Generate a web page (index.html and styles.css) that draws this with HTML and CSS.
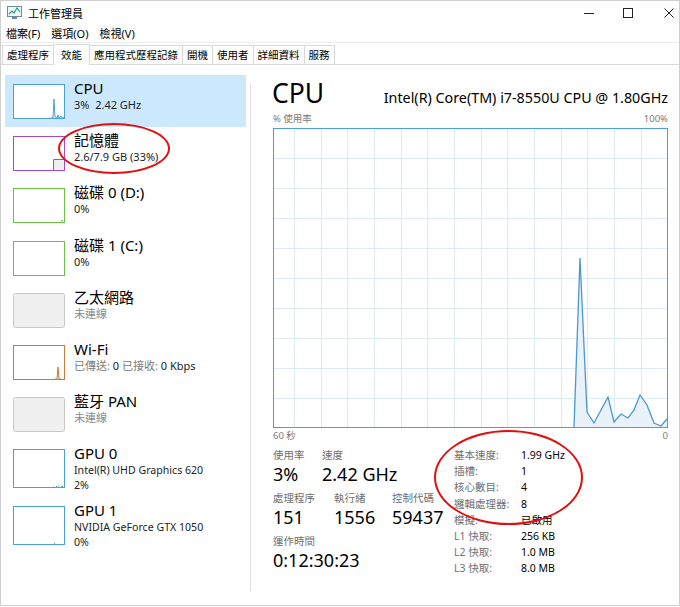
FILE: index.html
```html
<!DOCTYPE html>
<html lang="zh-Hant">
<head>
  <meta charset="UTF-8" />
  <title>工作管理員</title>
  <link rel="stylesheet" href="styles.css">
</head>
<body>
  <div class="window">
    <div class="titlebar">
      <svg class="app-icon" width="15" height="13" viewBox="0 0 15 13">
        <rect x="0.5" y="0.5" width="14" height="10" fill="#eef5fb" stroke="#6f8aa3"/>
        <polyline points="2,8 5,5 7,7 10,2 13,6" fill="none" stroke="#2e9d6a" stroke-width="1.2"/>
        <rect x="5" y="11" width="5" height="2" fill="#6f8aa3"/>
      </svg>
      <span class="title">工作管理員</span>
      <div class="controls">
        <svg class="ctrl" width="10" height="10" viewBox="0 0 10 10"><line x1="0" y1="5.5" x2="10" y2="5.5" stroke="#222" /></svg>
        <svg class="ctrl max" width="10" height="10" viewBox="0 0 10 10"><rect x="0.5" y="0.5" width="9" height="9" fill="none" stroke="#222" /></svg>
        <svg class="ctrl close" width="10" height="10" viewBox="0 0 10 10"><path d="M0.5 0.5 L9.5 9.5 M9.5 0.5 L0.5 9.5" stroke="#222" /></svg>
      </div>
    </div>

    <div class="menubar">
      <span>檔案(F)</span>
      <span>選項(O)</span>
      <span>檢視(V)</span>
    </div>

    <div class="tabs">
      <div class="tab">處理程序</div>
      <div class="tab active">效能</div>
      <div class="tab">應用程式歷程記錄</div>
      <div class="tab">開機</div>
      <div class="tab">使用者</div>
      <div class="tab">詳細資料</div>
      <div class="tab">服務</div>
    </div>

    <div class="main">
      <div class="sidebar">
        <div class="item selected">
          <svg class="thumb" width="52" height="35" viewBox="0 0 52 35">
            <rect x="0.5" y="0.5" width="51" height="34" fill="#fff" stroke="#4a9fd8"/>
            <polyline points="38,34 40,34 41,15 42,33 44,34 45,31 46,34 48,32 49,34 51,33" fill="none" stroke="#4a9fd8"/>
          </svg>
          <div class="info">
            <div class="name">CPU</div>
            <div class="sub">3%&nbsp; 2.42 GHz</div>
          </div>
        </div>
        <div class="item">
          <svg class="thumb" width="52" height="35" viewBox="0 0 52 35">
            <rect x="0.5" y="0.5" width="51" height="34" fill="#fff" stroke="#a64bc8"/>
            <path d="M51 23.5 H40.5 V34" fill="#f2eef5" stroke="#a64bc8"/>
            <rect x="41" y="24" width="10" height="10" fill="#f1eef3"/>
          </svg>
          <div class="info">
            <div class="name">記憶體</div>
            <div class="sub">2.6/7.9 GB (33%)</div>
          </div>
        </div>
        <div class="item">
          <svg class="thumb" width="52" height="35" viewBox="0 0 52 35">
            <rect x="0.5" y="0.5" width="51" height="34" fill="#fff" stroke="#6cc04a"/>
            <path d="M48 33.5 L49 32 L50 33.5" fill="none" stroke="#6cc04a"/>
          </svg>
          <div class="info">
            <div class="name">磁碟 0 (D:)</div>
            <div class="sub">0%</div>
          </div>
        </div>
        <div class="item">
          <svg class="thumb" width="52" height="35" viewBox="0 0 52 35">
            <rect x="0.5" y="0.5" width="51" height="34" fill="#fff" stroke="#6cc04a"/>
          </svg>
          <div class="info">
            <div class="name">磁碟 1 (C:)</div>
            <div class="sub">0%</div>
          </div>
        </div>
        <div class="item">
          <svg class="thumb" width="52" height="35" viewBox="0 0 52 35">
            <rect x="0.5" y="0.5" width="51" height="34" rx="2" fill="#f0f0f0" stroke="#c8c8c8"/>
          </svg>
          <div class="info">
            <div class="name">乙太網路</div>
            <div class="sub muted">未連線</div>
          </div>
        </div>
        <div class="item">
          <svg class="thumb" width="52" height="35" viewBox="0 0 52 35">
            <rect x="0.5" y="0.5" width="51" height="34" fill="#fff" stroke="#c97b3f"/>
            <polyline points="42,34 44,34 45,22 46,34 48,34" fill="none" stroke="#c97b3f"/>
          </svg>
          <div class="info">
            <div class="name">Wi-Fi</div>
            <div class="sub"><span class="muted">已傳送:</span> 0 <span class="muted">已接收:</span> 0 Kbps</div>
          </div>
        </div>
        <div class="item">
          <svg class="thumb" width="52" height="35" viewBox="0 0 52 35">
            <rect x="0.5" y="0.5" width="51" height="34" rx="2" fill="#f0f0f0" stroke="#c8c8c8"/>
          </svg>
          <div class="info">
            <div class="name">藍牙 PAN</div>
            <div class="sub muted">未連線</div>
          </div>
        </div>
        <div class="item tall">
          <svg class="thumb" width="52" height="39" viewBox="0 0 52 39">
            <rect x="0.5" y="0.5" width="51" height="38" fill="#fff" stroke="#4a9fd8"/>
            <path d="M40 38 h1 M43 37.5 h1 M45 37 h1 M48 37.5 h2" stroke="#4a9fd8"/>
          </svg>
          <div class="info">
            <div class="name">GPU 0</div>
            <div class="sub">Intel(R) UHD Graphics 620</div>
            <div class="sub">2%</div>
          </div>
        </div>
        <div class="item tall">
          <svg class="thumb" width="52" height="39" viewBox="0 0 52 39">
            <rect x="0.5" y="0.5" width="51" height="38" fill="#fff" stroke="#4a9fd8"/>
            <path d="M41 37.5 h1" stroke="#4a9fd8"/>
          </svg>
          <div class="info">
            <div class="name">GPU 1</div>
            <div class="sub">NVIDIA GeForce GTX 1050</div>
            <div class="sub">0%</div>
          </div>
        </div>
      </div>

      <div class="divider"></div>

      <div class="detail">
        <div class="detail-head">
          <h1>CPU</h1>
          <span class="model">Intel(R) Core(TM) i7-8550U CPU @ 1.80GHz</span>
        </div>
        <div class="axis"><span>% 使用率</span><span>100%</span></div>

        <svg class="graph" width="395" height="300" viewBox="0 0 395 300">
          <g stroke="#dcebf7" stroke-width="1">
            <path d="M21.5 0V300 M48.5 0V300 M74.5 0V300 M101.5 0V300 M128.5 0V300 M154.5 0V300 M181.5 0V300 M208.5 0V300 M234.5 0V300 M261.5 0V300 M288.5 0V300 M314.5 0V300 M341.5 0V300 M368.5 0V300"/>
            <path d="M0 30.5H395 M0 60.5H395 M0 90.5H395 M0 120.5H395 M0 150.5H395 M0 180.5H395 M0 210.5H395 M0 240.5H395 M0 270.5H395"/>
          </g>
          <polygon points="301,299 307,130 314,284 321,295 335,269 341,294 348,286 355,290 361,282 367,267 374,277 381,295 388,298 394,291 394,299" fill="#e9f2f9"/>
          <polyline points="301,299 307,130 314,284 321,295 335,269 341,294 348,286 355,290 361,282 367,267 374,277 381,295 388,298 394,291" fill="none" stroke="#4a98cf" stroke-width="1.3"/>
          <rect x="0.5" y="0.5" width="394" height="299" fill="none" stroke="#4a9fd8"/>
        </svg>
        <div class="axis"><span>60 秒</span><span>0</span></div>

        <div class="stats">
          <div class="stats-left">
            <div class="stat-row">
              <div class="stat w49"><div class="label">使用率</div><div class="value">3%</div></div>
              <div class="stat"><div class="label">速度</div><div class="value">2.42 GHz</div></div>
            </div>
            <div class="stat-row">
              <div class="stat w61"><div class="label">處理程序</div><div class="value">151</div></div>
              <div class="stat w58"><div class="label">執行緒</div><div class="value">1556</div></div>
              <div class="stat"><div class="label">控制代碼</div><div class="value">59437</div></div>
            </div>
            <div class="stat-row">
              <div class="stat"><div class="label">運作時間</div><div class="value">0:12:30:23</div></div>
            </div>
          </div>
          <table class="stats-right">
            <tr><td>基本速度:</td><td>1.99 GHz</td></tr>
            <tr><td>插槽:</td><td>1</td></tr>
            <tr><td>核心數目:</td><td>4</td></tr>
            <tr><td>邏輯處理器:</td><td>8</td></tr>
            <tr><td>模擬:</td><td>已啟用</td></tr>
            <tr><td>L1 快取:</td><td>256 KB</td></tr>
            <tr><td>L2 快取:</td><td>1.0 MB</td></tr>
            <tr><td>L3 快取:</td><td>8.0 MB</td></tr>
          </table>
        </div>
      </div>
    </div>

    <div class="mark mark-memory"></div>
    <div class="mark mark-specs"></div>
  </div>
</body>
</html>
```

FILE: styles.css
```css
* {
  box-sizing: border-box;
  margin: 0;
  padding: 0;
}

body {
  background: #ffffff;
  font-family: "Noto Sans", "Noto Sans CJK TC", sans-serif;
  color: #000;
}

.window {
  position: relative;
  width: 680px;
  height: 606px;
  border: 1px solid #cfcfcf;
  background: #fff;
  display: flex;
  flex-direction: column;
}

/* title bar */
.titlebar {
  height: 23px;
  display: flex;
  align-items: center;
  font-size: 11px;
}

.app-icon {
  margin-left: 6px;
}

.title {
  margin-left: 6px;
}

.controls {
  margin-left: auto;
  display: flex;
  align-items: center;
}

.ctrl { margin-left: 29px; }
.ctrl:first-child { margin-left: 0; }
.ctrl.close { margin-left: 31px; margin-right: 5px; }

/* menu */
.menubar {
  height: 18px;
  display: flex;
  align-items: center;
  gap: 11px;
  padding-left: 5px;
  font-size: 11px;
}

/* tabs */
.tabs {
  height: 23px;
  display: flex;
  align-items: flex-end;
  border-top: 1px solid #ececec;
  border-bottom: 1px solid #d9d9d9;
  padding-left: 1px;
  font-size: 10.5px;
}

.tab {
  height: 19px;
  line-height: 18px;
  padding: 0 4px;
  border: 1px solid #d9d9d9;
  border-bottom: none;
  margin-right: -1px;
  background: #fff;
  white-space: nowrap;
}

.tab.active {
  height: 21px;
  line-height: 20px;
  padding: 0 7px;
  margin-bottom: -1px;
  position: relative;
}

/* main */
.main {
  flex: 1;
  display: flex;
  padding-top: 10px;
}

.sidebar {
  width: 245px;
  padding-left: 4px;
}

.item {
  height: 52.2px;
  display: flex;
  gap: 9px;
  padding: 9px 0 0 8px;
}

.item.tall { height: 57px; }

.item.selected { background: #cce8ff; }

.thumb { flex: none; }

.info { margin-top: -6px; }

.name {
  font-size: 15px;
  line-height: 20px;
}

.sub {
  font-size: 11px;
  line-height: 13px;
  color: #222;
}

.tall .sub {
  font-size: 10.6px;
  line-height: 14.5px;
}

.muted { color: #8a8a8a; }
.sub .muted { color: #7a7a7a; }

.divider {
  width: 1px;
  margin: 10px 0 14px 4px;
  background: #dedede;
}

/* detail panel */
.detail {
  flex: 1;
  padding: 2px 11px 0 21px;
}

.detail-head {
  display: flex;
  justify-content: space-between;
  align-items: baseline;
  height: 32px;
}

.detail-head h1 {
  font-size: 26.5px;
  font-weight: normal;
  line-height: 32px;
}

.model {
  font-size: 14.3px;
}

.axis {
  width: 396px;
  padding-left: 1px;
  display: flex;
  justify-content: space-between;
  font-size: 9.5px;
  line-height: 14px;
  color: #7a7a7a;
}

.detail-head + .axis { margin-top: 3px; margin-bottom: 2px; }

.graph {
  display: block;
  margin-left: 1px;
}

.graph + .axis { margin-top: 1px; }

/* stats */
.stats {
  display: flex;
  margin-top: 5px;
  padding-left: 1px;
}

.stats-left { width: 181px; }

.stat-row {
  display: flex;
  margin-bottom: 5px;
}

.w49 { width: 49px; }
.w61 { width: 61px; }
.w58 { width: 58px; }

.label {
  font-size: 10.5px;
  line-height: 14px;
  color: #707070;
}

.value {
  font-size: 18px;
  line-height: 24px;
}

.stats-right {
  border-collapse: collapse;
  font-size: 10.5px;
}

.stats-right td {
  height: 15.7px;
  line-height: 15.7px;
  padding: 0;
  white-space: nowrap;
}

.stats-right td:first-child {
  width: 67px;
  color: #707070;
}

/* red annotation rings */
.mark {
  position: absolute;
  border: 2px solid #e01010;
  border-radius: 50%;
}

.mark-memory {
  left: 57px;
  top: 122px;
  width: 112px;
  height: 51px;
}

.mark-specs {
  left: 433px;
  top: 429px;
  width: 149px;
  height: 95px;
}
```
